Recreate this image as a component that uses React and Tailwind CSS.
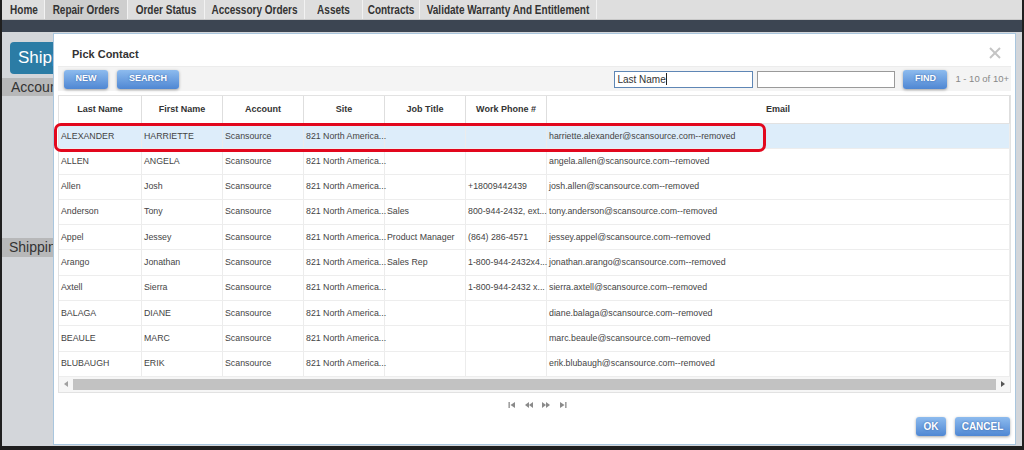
import React from "react";

const tabs = [
  { label: "Home", w: "w-[41px]" },
  { label: "Repair Orders", w: "w-[83px]", active: true },
  { label: "Order Status", w: "w-[77px]" },
  { label: "Accessory Orders", w: "w-[100px]" },
  { label: "Assets", w: "w-[58px]" },
  { label: "Contracts", w: "w-[57px]" },
  { label: "Validate Warranty And Entitlement", w: "w-[177px]" },
];

const columns = [
  { label: "Last Name", w: "w-[83px]" },
  { label: "First Name", w: "w-[81px]" },
  { label: "Account", w: "w-[81px]" },
  { label: "Site", w: "w-[81px]", spill: true },
  { label: "Job Title", w: "w-[81px]" },
  { label: "Work Phone #", w: "w-[81px]", spill: true },
  { label: "Email", w: "flex-1" },
];

const site = "821 North America...";

const rows = [
  ["ALEXANDER", "HARRIETTE", "Scansource", site, "", "", "harriette.alexander@scansource.com--removed"],
  ["ALLEN", "ANGELA", "Scansource", site, "", "", "angela.allen@scansource.com--removed"],
  ["Allen", "Josh", "Scansource", site, "", "+18009442439", "josh.allen@scansource.com--removed"],
  ["Anderson", "Tony", "Scansource", site, "Sales", "800-944-2432, ext...", "tony.anderson@scansource.com--removed"],
  ["Appel", "Jessey", "Scansource", site, "Product Manager", "(864) 286-4571", "jessey.appel@scansource.com--removed"],
  ["Arango", "Jonathan", "Scansource", site, "Sales Rep", "1-800-944-2432x4...", "jonathan.arango@scansource.com--removed"],
  ["Axtell", "Sierra", "Scansource", site, "", "1-800-944-2432 x...", "sierra.axtell@scansource.com--removed"],
  ["BALAGA", "DIANE", "Scansource", site, "", "", "diane.balaga@scansource.com--removed"],
  ["BEAULE", "MARC", "Scansource", site, "", "", "marc.beaule@scansource.com--removed"],
  ["BLUBAUGH", "ERIK", "Scansource", site, "", "", "erik.blubaugh@scansource.com--removed"],
];

function BlueButton({ children, className = "" }) {
  return (
    <button
      className={
        "h-[19px] rounded-[3px] bg-gradient-to-b from-[#8dbbee] to-[#4f87d3] text-white text-[9px] font-bold uppercase shadow-[0_1px_3px_rgba(0,0,0,0.35)] [text-shadow:0_0_2px_rgba(40,80,150,0.8)] " +
        className
      }
    >
      {children}
    </button>
  );
}

function PagerIcon({ type }) {
  return (
    <svg width="8" height="6" viewBox="0 0 8 6" className="fill-[#8a8a8a]">
      {type === "first" && (
        <>
          <rect x="0.5" y="0" width="1.3" height="6" />
          <polygon points="7,0 7,6 2.5,3" />
        </>
      )}
      {type === "prev" && (
        <>
          <polygon points="4,0 4,6 0,3" />
          <polygon points="8,0 8,6 4,3" />
        </>
      )}
      {type === "next" && (
        <>
          <polygon points="0,0 0,6 4,3" />
          <polygon points="4,0 4,6 8,3" />
        </>
      )}
      {type === "last" && (
        <>
          <polygon points="1,0 1,6 5.5,3" />
          <rect x="6.2" y="0" width="1.3" height="6" />
        </>
      )}
    </svg>
  );
}

export default function App() {
  return (
    <div className="relative w-[1024px] h-[450px] overflow-hidden border-x-2 border-b-4 border-[#1f1f1f] bg-[#d3d6da] font-['Liberation_Sans',Arial,sans-serif]">
      {/* top navigation */}
      <div className="flex h-[20px] bg-[#dedede] border-b border-[#c8c8c8] pl-[2px]">
        {tabs.map((t) => (
          <div
            key={t.label}
            className={
              "flex items-center justify-center border-r border-[#f2f2f2] whitespace-nowrap " +
              t.w +
              (t.active ? " bg-[#cecece]" : "")
            }
          >
            <span className="text-[10px] font-bold text-[#333] scale-y-[1.2]">{t.label}</span>
          </div>
        ))}
      </div>
      <div className="h-[12px] bg-[#3c4552]" />

      {/* page behind the dialog, only its left strip shows */}
      <div className="w-[51px] overflow-hidden pt-[10px] text-[#333] whitespace-nowrap">
        <div className="ml-[8px] w-[90px] h-[32px] rounded-[4px] bg-[#2b7ca5] text-white text-[17px] flex items-center pl-[8px]">
          Shipping
        </div>
        <div className="mt-[4px] h-[18px] bg-[#b7b8b9] text-[14px] flex items-center pl-[9px]">
          Account
        </div>
        <div className="mt-[142px] h-[19px] bg-[#b7b8b9] text-[14px] flex items-center pl-[7px]">
          Shipping
        </div>
      </div>

      {/* dialog */}
      <div className="absolute left-[51px] top-[33px] w-[963px] h-[412px] bg-white border border-[#a9c6de] flex flex-col px-[4px]">
        <div className="h-[32px] flex items-start justify-between pt-[12px] pl-[14px] pr-[10px]">
          <span className="text-[11px] font-bold text-[#333]">Pick Contact</span>
          <svg width="12" height="12" viewBox="0 0 12 12" className="stroke-[#c4c4c4] mt-[1px]" strokeWidth="2">
            <line x1="1" y1="1" x2="11" y2="11" />
            <line x1="11" y1="1" x2="1" y2="11" />
          </svg>
        </div>

        <div className="h-[25px] flex items-center bg-[#f4f4f4] border-t border-[#ececec] pl-[6px] pr-[2px]">
          <BlueButton className="w-[44px]">New</BlueButton>
          <BlueButton className="w-[62px] ml-[9px]">Search</BlueButton>
          <div className="ml-auto flex items-center">
            <div className="w-[139px] h-[17px] border border-[#5e86b5] bg-white text-[10px] text-[#333] flex items-center pl-[2px]">
              Last Name<span className="w-px h-[12px] bg-[#222]" />
            </div>
            <div className="w-[138px] h-[17px] ml-[4px] border border-[#9a9a9a] bg-white" />
            <BlueButton className="w-[44px] ml-[8px]">Find</BlueButton>
            <span className="ml-[8px] text-[9.5px] text-[#888] whitespace-nowrap">1 - 10 of 10+</span>
          </div>
        </div>

        <div className="mt-[4px] border border-[#e2e2e2] flex flex-col">
          <div className="flex h-[28px] border-b border-[#e2e2e2]">
            {columns.map((c) => (
              <div
                key={c.label}
                className={"flex items-center justify-center border-r border-[#dedede] text-[9px] font-bold text-[#333] " + c.w}
              >
                {c.label}
              </div>
            ))}
          </div>
          {rows.map((r, i) => (
            <div
              key={i}
              className={"flex h-[25.3px] border-b border-[#ededed] " + (i === 0 ? "bg-[#ddedfa]" : "bg-white")}
            >
              {r.map((v, j) => (
                <div
                  key={j}
                  className={
                    "flex items-center border-r border-[#ececec] pl-[2px] text-[8.8px] text-[#444] min-w-0 whitespace-nowrap " +
                    (columns[j].spill ? "overflow-visible " : "overflow-hidden ") +
                    columns[j].w
                  }
                >
                  {v}
                </div>
              ))}
            </div>
          ))}
          <div className="flex h-[15px] items-center bg-[#f6f6f6]">
            <div className="w-[14px] h-full flex items-center justify-center">
              <svg width="4" height="6" viewBox="0 0 4 6" className="fill-[#a0a0a0]">
                <polygon points="4,0 4,6 0,3" />
              </svg>
            </div>
            <div className="flex-1 h-[11px] bg-[#c2c2c2]" />
            <div className="w-[14px] h-full flex items-center justify-center">
              <svg width="4" height="6" viewBox="0 0 4 6" className="fill-[#555]">
                <polygon points="0,0 0,6 4,3" />
              </svg>
            </div>
          </div>
        </div>

        <div className="flex justify-center items-center gap-[9px] h-[24px] pl-[5px]">
          <PagerIcon type="first" />
          <PagerIcon type="prev" />
          <PagerIcon type="next" />
          <PagerIcon type="last" />
        </div>

        <div className="flex justify-end gap-[9px] pr-[1px]">
          <BlueButton className="w-[30px] text-[10px]">OK</BlueButton>
          <BlueButton className="w-[55px] text-[10px]">Cancel</BlueButton>
        </div>

        {/* highlight annotation */}
        <div className="absolute left-0 top-[89px] w-[712px] h-[29px] border-[3px] border-[#e2071d] rounded-[7px] pointer-events-none" />
      </div>
    </div>
  );
}
